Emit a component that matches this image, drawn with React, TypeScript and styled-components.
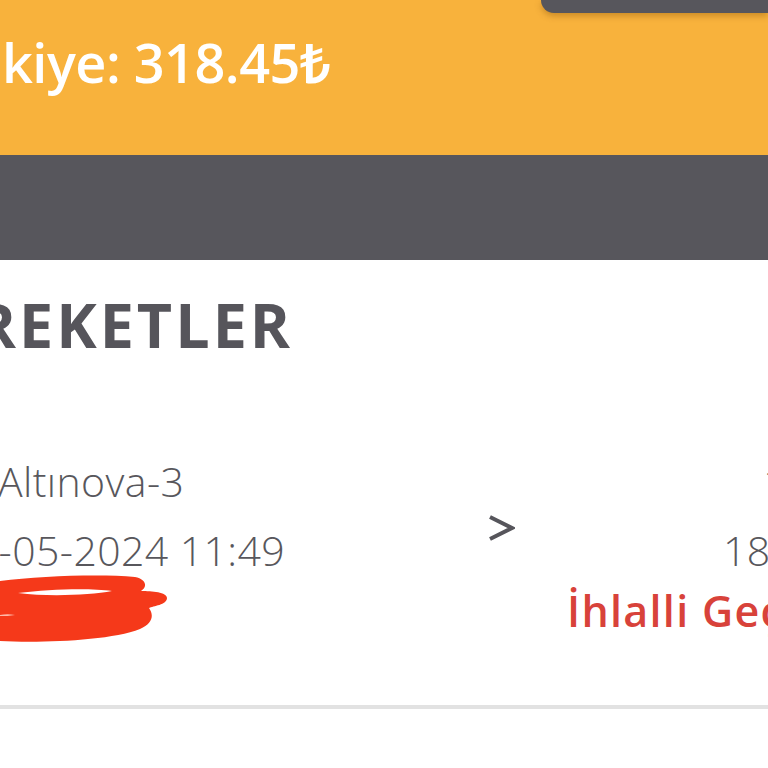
import React from "react";
import styled, { createGlobalStyle } from "styled-components";

const Global = createGlobalStyle`
  html, body { margin: 0; padding: 0; background: #ffffff; }
  body { font-family: "Open Sans", "Noto Sans", sans-serif; }
`;

const Viewport = styled.div`
  width: 768px;
  height: 768px;
  overflow: hidden;
  background: #ffffff;
  display: flex;
  flex-direction: column;
`;

const Header = styled.header`
  height: 155px;
  flex: none;
  background: #f8b23c;
  display: flex;
  flex-direction: column;
`;

const TabRow = styled.div`
  display: flex;
  justify-content: flex-end;
`;

const Tab = styled.div`
  width: 227px;
  height: 13px;
  background: #57565c;
  border-bottom-left-radius: 13px;
  box-shadow: 0 3px 6px rgba(120, 70, 0, 0.35);
`;

const Balance = styled.div`
  margin: 17px 0 0 -64px;
  font-size: 54px;
  line-height: 64px;
  font-weight: 600;
  color: #ffffff;
  white-space: nowrap;
  letter-spacing: -0.5px;
`;

const Band = styled.div`
  height: 105px;
  flex: none;
  background: #57565c;
`;

const Section = styled.section`
  display: flex;
  flex-direction: column;
`;

const Title = styled.h1`
  margin: 25px 0 0 -119px;
  font-size: 61px;
  line-height: 80px;
  font-weight: 700;
  color: #56555b;
  white-space: nowrap;
  letter-spacing: 3px;
`;

const Row = styled.div`
  margin-top: 82px;
  height: 262px;
  flex: none;
  display: flex;
  border-bottom: 4px solid #e2e2e2;
  box-sizing: border-box;
`;

const LeftCol = styled.div`
  width: 380px;
  flex: none;
  margin-left: -49px;
  display: flex;
  flex-direction: column;
`;

const Line = styled.div<{ $indent?: number; $tone?: "gray" | "red"; $lh?: number }>`
  padding-left: ${(p) => p.$indent ?? 0}px;
  font-size: ${(p) => (p.$tone === "red" ? 43 : 41)}px;
  line-height: ${(p) => p.$lh ?? 69}px;
  font-weight: ${(p) => (p.$tone === "red" ? 600 : 300)};
  color: ${(p) => (p.$tone === "red" ? "#d8423a" : "#58575c")};
  white-space: nowrap;
  letter-spacing: ${(p) => (p.$tone === "red" ? 1.3 : 0.4)}px;
`;

const Scribble = styled.svg`
  display: block;
  margin-left: 49px;
  margin-top: -10px;
`;

const ArrowCol = styled.div`
  width: 236px;
  flex: none;
  display: flex;
  align-items: flex-start;
  padding: 67px 0 0 156px;
  box-sizing: border-box;
`;

const RightCol = styled.div`
  flex: none;
  width: 400px;
  display: flex;
  flex-direction: column;
`;

export default function App() {
  return (
    <>
      <Global />
      <Viewport>
        <Header>
          <TabRow>
            <Tab />
          </TabRow>
          <Balance>Bakiye: 318.45₺</Balance>
        </Header>
        <Band />
        <Section>
          <Title>HAREKETLER</Title>
          <Row>
            <LeftCol>
              <Line $indent={47}>Altınova-3</Line>
              <Line>18-05-2024 11:49</Line>
              <Scribble width="170" height="70" viewBox="0 0 170 70" aria-hidden="true">
                <path
                  d="M0 6 C40 1 100 -1 135 2 C146 4 148 12 141 16 C152 16 167 17 167 23 C167 30 153 31 149 33 C154 40 153 48 140 54 C110 66 40 68 0 66 Z"
                  fill="#f5391a"
                />
                <path d="M18 18 C50 14 90 13 112 16 C90 20 50 22 18 18 Z" fill="#ffffff" />
                <path d="M0 40 C5 39 10 39 15 40 C10 41 5 41 0 41 Z" fill="#ffb8a8" />
              </Scribble>
            </LeftCol>
            <ArrowCol>
              <svg width="28" height="28" viewBox="0 0 28 28" aria-hidden="true">
                <path d="M3 3 L25 14 L3 25" fill="none" stroke="#56555b" strokeWidth="4" strokeLinejoin="miter" />
              </svg>
            </ArrowCol>
            <RightCol>
              <Line $indent={196}>1</Line>
              <Line $indent={156}>18-05-2024 12:06</Line>
              <Line $tone="red" $lh={52}>İhlalli Geçiş</Line>
            </RightCol>
          </Row>
        </Section>
      </Viewport>
    </>
  );
}
